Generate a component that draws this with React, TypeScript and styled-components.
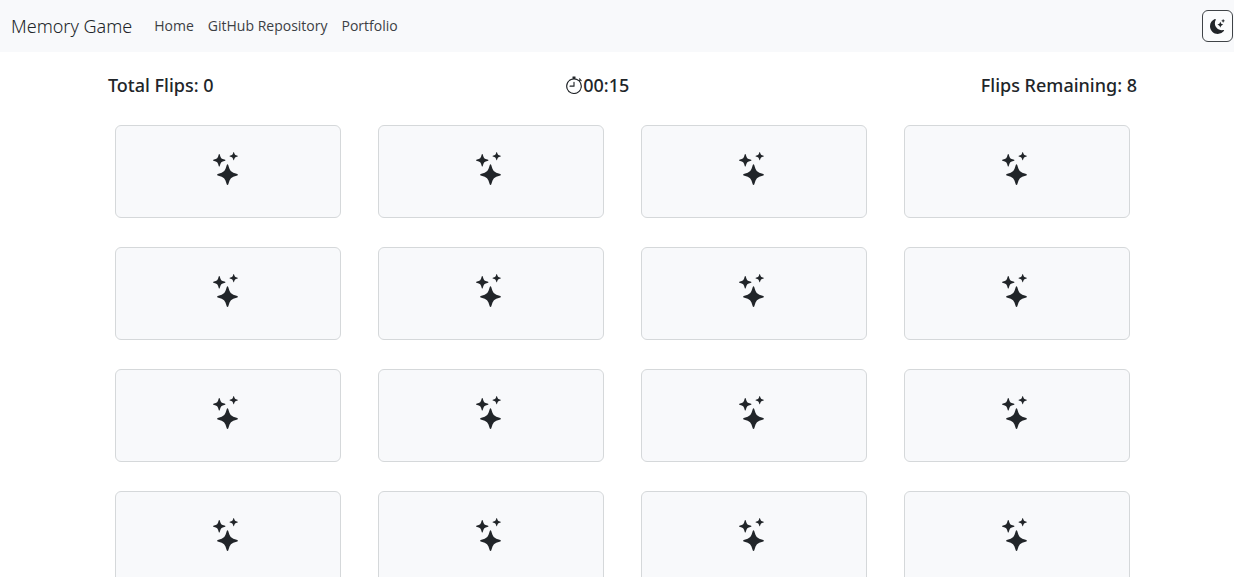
import React from "react";
import styled, { createGlobalStyle } from "styled-components";
import { BsMoonStarsFill, BsStars, BsStopwatch } from "react-icons/bs";

const GlobalStyle = createGlobalStyle`
  * { box-sizing: border-box; }
  body {
    margin: 0;
    background: #fff;
    color: #212529;
    font-family: "Segoe UI", "Noto Sans", "Open Sans", sans-serif;
  }
`;

const Page = styled.div`
  height: 100vh;
  overflow-y: auto;
  scrollbar-width: none;
`;

const Navbar = styled.nav`
  display: flex;
  align-items: center;
  height: 52px;
  padding: 0 1px 0 11px;
  background: #f8f9fb;
`;

const Brand = styled.a`
  margin-right: 22px;
  color: #212529;
  font-size: 18px;
  font-weight: 300;
  line-height: 28px;
  text-decoration: none;
`;

const NavLinks = styled.div`
  display: flex;
  flex: 1;
  gap: 14px;
`;

const NavLink = styled.a`
  color: #3c4044;
  font-family: "Segoe UI", "Open Sans", "Noto Sans", sans-serif;
  font-size: 14px;
  line-height: 22px;
  text-decoration: none;
`;

const ThemeButton = styled.button`
  display: flex;
  align-items: center;
  justify-content: center;
  width: 31px;
  height: 32px;
  padding: 0;
  border: 1px solid #3f4347;
  border-radius: 6px;
  background: #fbfcfd;
  color: #212529;
  font-size: 15px;
  cursor: pointer;
`;

const Main = styled.main`
  padding: 21px 97px 22px 108px;
`;

const Stats = styled.header`
  display: flex;
  align-items: center;
  justify-content: space-between;
  margin-bottom: 28px;
`;

const Stat = styled.h2`
  display: flex;
  align-items: center;
  margin: 0;
  font-size: 18px;
  font-weight: 500;
  line-height: 24px;
`;

const Board = styled.section`
  display: grid;
  grid-template-columns: repeat(4, 1fr);
  gap: 29px 37px;
  padding: 0 7px;
`;

const Card = styled.button`
  display: flex;
  align-items: center;
  justify-content: center;
  height: 93px;
  padding: 0 1px 6px 0;
  border: 1px solid #d5d8da;
  border-radius: 6px;
  background: #f8f9fb;
  color: #212529;
  font-size: 33px;
  cursor: pointer;
`;

const cards = Array.from({ length: 16 }, (_, i) => i + 1);

export default function App() {
  return (
    <Page>
      <GlobalStyle />
      <Navbar>
        <Brand href="#">Memory Game</Brand>
        <NavLinks>
          <NavLink href="#">Home</NavLink>
          <NavLink href="#">GitHub Repository</NavLink>
          <NavLink href="#">Portfolio</NavLink>
        </NavLinks>
        <ThemeButton type="button" aria-label="Toggle dark mode">
          <BsMoonStarsFill />
        </ThemeButton>
      </Navbar>
      <Main>
        <Stats>
          <Stat>Total Flips: 0</Stat>
          <Stat>
            <BsStopwatch />
            00:15
          </Stat>
          <Stat>Flips Remaining: 8</Stat>
        </Stats>
        <Board>
          {cards.map((card) => (
            <Card key={card} type="button" aria-label={`Card ${card}`}>
              <BsStars />
            </Card>
          ))}
        </Board>
      </Main>
    </Page>
  );
}
